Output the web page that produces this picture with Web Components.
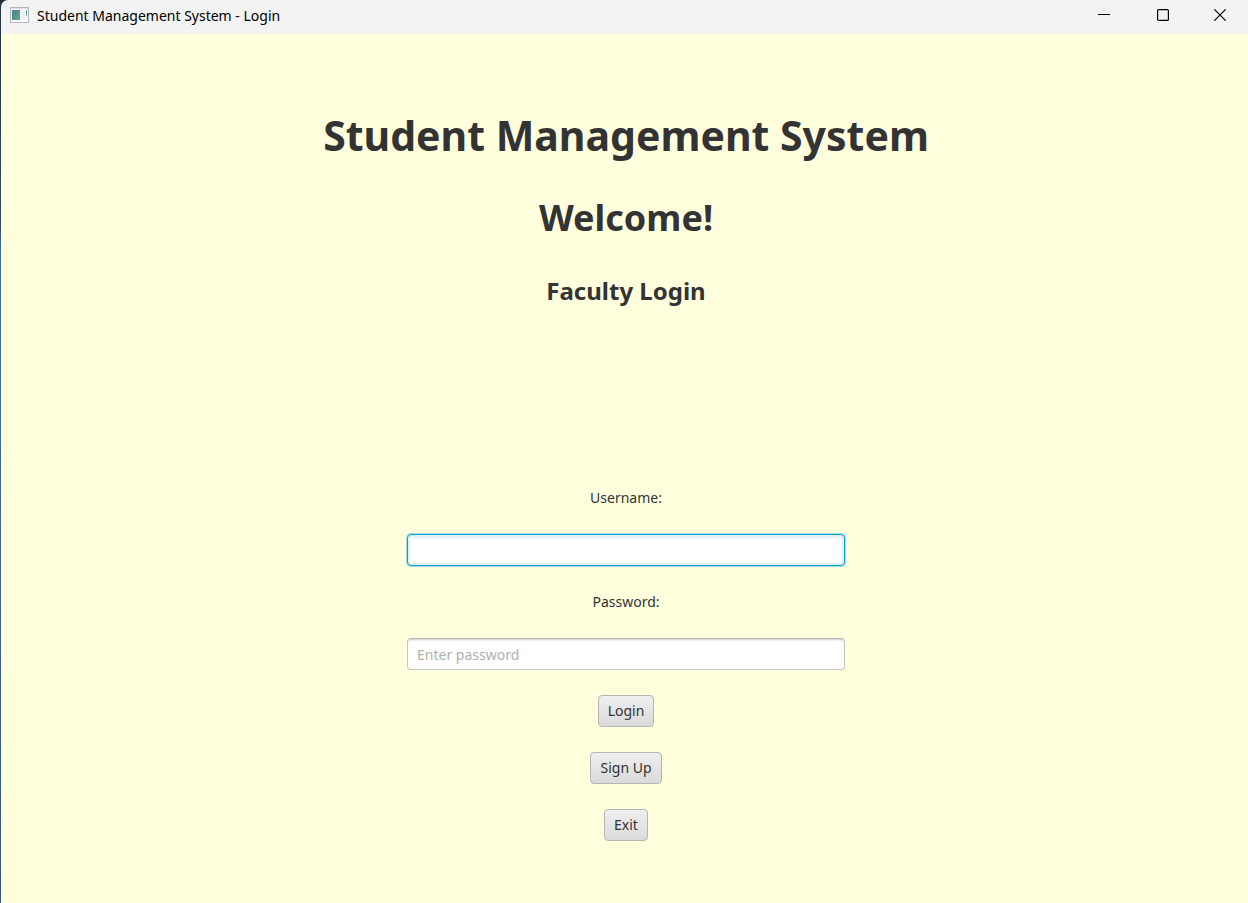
<!DOCTYPE html>
<html lang="en">
<head>
<meta charset="utf-8">
<title>Student Management System - Login</title>
<style>
html,body{margin:0;height:100%}
body{background:#ffffde;color:#333;font:14px/22px "Noto Sans","Open Sans",sans-serif}
</style>
</head>
<body>
<app-window>
  <title-bar slot="bar">Student Management System - Login</title-bar>
  <page-heading>
    <span>Student Management System</span>
    <span slot="welcome">Welcome!</span>
    <span slot="section">Faculty Login</span>
  </page-heading>
  <login-form></login-form>
</app-window>
<script>
const define = (name, html, setup) => customElements.define(name, class extends HTMLElement {
  constructor() {
    super();
    const t = document.createElement('template');
    t.innerHTML = html;
    this.attachShadow({mode: 'open'}).append(t.content.cloneNode(true));
    if (setup) setup(this);
  }
});

define('app-window', `
<style>
:host{display:flex;flex-direction:column;min-height:100vh;box-sizing:border-box;padding-left:1px;background:linear-gradient(#263442,#34465c 25%,#466a96 27%,#466a96 50%,#38557c)}
main{flex:1;display:flex;flex-direction:column;align-items:center;justify-content:space-between;box-sizing:border-box;padding:71px 24px 62px 27px;gap:24px;background:#ffffde}
</style>
<slot name="bar"></slot>
<main><slot></slot></main>`);

define('title-bar', `
<style>
:host{display:flex;align-items:center;height:34px;background:#f3f3f3;color:#000;border-top-left-radius:7px}
.icon{margin:0 8px 4px 9px;flex:none}
.name{flex:1;padding-bottom:2px}
button{width:59px;height:34px;padding:0 0 4px;border:0;background:none;color:#000;display:flex;align-items:center;justify-content:center}
button:last-child{width:56px}
button:hover{background:#e5e5e5}
svg{display:block}
</style>
<svg class="icon" width="19" height="16" viewBox="0 0 19 16" aria-hidden="true">
 <defs><linearGradient id="g" x1="0" y1="0" x2="1" y2="1"><stop offset="0" stop-color="#467b9e"/><stop offset="1" stop-color="#62ae80"/></linearGradient>
 <linearGradient id="h" x1="0" y1="0" x2="0" y2="1"><stop offset="0" stop-color="#5b8db5"/><stop offset="1" stop-color="#6cc07c"/></linearGradient></defs>
 <rect x=".5" y=".5" width="18" height="15" fill="#fbfbfd" stroke="#b2b5bc"/>
 <path d="M1 1.500h17" stroke="#dcdfe5"/>
 <rect x="2" y="3" width="8" height="10" fill="url(#g)"/>
 <rect x="11" y="3" width="4" height="10" fill="#eef1f5"/>
 <rect x="16" y="3" width="1" height="6" fill="url(#h)"/>
</svg>
<span class="name"><slot></slot></span>
<button type="button" aria-label="Minimize"><svg width="12" height="12"><path d="M0 5.500h12" stroke="currentColor"/></svg></button>
<button type="button" aria-label="Maximize"><svg width="12" height="12"><rect x=".6" y=".6" width="10.800" height="10.800" rx="1" fill="none" stroke="currentColor" stroke-width="1.200"/></svg></button>
<button type="button" aria-label="Close"><svg width="12" height="12"><path d="M.3.3l11.400 11.400M11.700.3L.3 11.700" stroke="currentColor" stroke-width="1.200"/></svg></button>`);

define('page-heading', `
<style>
:host{display:flex;flex-direction:column;align-items:center;gap:26px;text-align:center}
h1,h2,h3{margin:0;font-weight:700}
h1{font-size:41px;line-height:60px}
h2{font-size:36px;line-height:54px}
h3{font-size:24px;line-height:40px}
</style>
<h1><slot></slot></h1>
<h2><slot name="welcome"></slot></h2>
<h3><slot name="section"></slot></h3>`);

define('login-form', `
<style>
:host{display:block;width:100%;max-width:438px}
form{display:flex;flex-direction:column;align-items:center;gap:25px}
input{box-sizing:border-box;width:100%;height:32px;margin:0;padding:0 9px;border:1px solid #c4c4bc;border-top-color:#b8b8b2;border-radius:4px;background:#fff;color:#333;font:inherit;outline:0;box-shadow:inset 0 2px 2px -1px #ccc}
input::placeholder{color:#b0b0b0;opacity:1}
input:focus,input.current{border-color:#039ed3;box-shadow:0 0 0 1px #a5e0e0,inset 0 0 0 2px #dff1f9,inset 0 3px 3px #e5e8eb}
button{box-sizing:border-box;height:32px;padding:0 9px;border:1px solid #b5b5b5;border-radius:4px;background:linear-gradient(#efefef,#dadada);color:#333;font:inherit}
</style>
<form>
 <label for="user">Username:</label>
 <input id="user" class="current" type="text" autocomplete="off">
 <label for="pass">Password:</label>
 <input id="pass" type="password" placeholder="Enter password">
 <button type="submit">Login</button>
 <button type="button">Sign Up</button>
 <button type="button">Exit</button>
</form>`, el => el.shadowRoot.querySelector('form').addEventListener('submit', e => e.preventDefault()));
</script>
</body>
</html>
